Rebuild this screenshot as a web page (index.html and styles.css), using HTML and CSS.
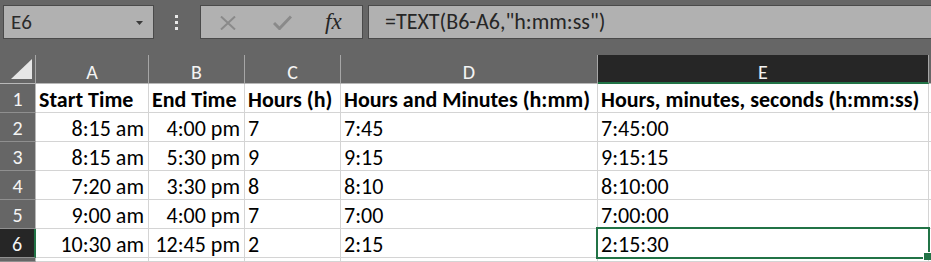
FILE: index.html
```html
<!DOCTYPE html>
<html>
<head>
<meta charset="utf-8">
<link rel="stylesheet" href="styles.css">
</head>
<body>
<div class="toolbar">
  <div class="namebox">
    <span class="name">E6</span>
    <svg class="drop" width="7" height="4" viewBox="0 0 7 4"><path d="M0 0H7L3.5 4Z" fill="#3a3a3a"/></svg>
  </div>
  <div class="grip"><i></i><i></i><i></i></div>
  <div class="fxbtns">
    <svg class="ic-x" width="16" height="14" viewBox="0 0 16 14"><path d="M1 0.5L15 13.5M15 0.5L1 13.5" stroke="#8a8a8a" stroke-width="2" fill="none"/></svg>
    <svg class="ic-ok" width="19" height="15" viewBox="0 0 19 15"><path d="M1 8L6.5 13.5L18 1.5" stroke="#8a8a8a" stroke-width="3" fill="none"/></svg>
    <span class="fx">fx</span>
  </div>
  <div class="formula">=TEXT(B6-A6,"h:mm:ss")</div>
</div>
<div class="sheet">
  <div class="hd corner"><svg width="35" height="28" viewBox="0 0 35 28"><path d="M32 4V24H11Z" fill="#e6e6e6"/></svg></div>
  <div class="hd">A</div>
  <div class="hd">B</div>
  <div class="hd">C</div>
  <div class="hd">D</div>
  <div class="hd hd-sel">E</div>
  <div class="hd hd-end"></div>

  <div class="rh">1</div>
  <div class="c b">Start Time</div>
  <div class="c b">End Time</div>
  <div class="c b">Hours (h)</div>
  <div class="c b">Hours and Minutes (h:mm)</div>
  <div class="c b">Hours, minutes, seconds (h:mm:ss)</div>
  <div class="c"></div>

  <div class="rh">2</div>
  <div class="c r">8:15 am</div>
  <div class="c r">4:00 pm</div>
  <div class="c">7</div>
  <div class="c">7:45</div>
  <div class="c">7:45:00</div>
  <div class="c"></div>

  <div class="rh">3</div>
  <div class="c r">8:15 am</div>
  <div class="c r">5:30 pm</div>
  <div class="c">9</div>
  <div class="c">9:15</div>
  <div class="c">9:15:15</div>
  <div class="c"></div>

  <div class="rh">4</div>
  <div class="c r">7:20 am</div>
  <div class="c r">3:30 pm</div>
  <div class="c">8</div>
  <div class="c">8:10</div>
  <div class="c">8:10:00</div>
  <div class="c"></div>

  <div class="rh">5</div>
  <div class="c r">9:00 am</div>
  <div class="c r">4:00 pm</div>
  <div class="c">7</div>
  <div class="c">7:00</div>
  <div class="c">7:00:00</div>
  <div class="c"></div>

  <div class="rh rh-sel">6</div>
  <div class="c r">10:30 am</div>
  <div class="c r">12:45 pm</div>
  <div class="c">2</div>
  <div class="c">2:15</div>
  <div class="c active">2:15:30<span class="selbox"><span class="handle"></span></span></div>
  <div class="c"></div>

  <div class="rh"></div>
  <div class="c"></div>
  <div class="c"></div>
  <div class="c"></div>
  <div class="c"></div>
  <div class="c"></div>
  <div class="c"></div>
</div>
</body>
</html>
```
FILE: styles.css
```css
html, body {
  margin: 0;
  padding: 0;
  background: #666666;
  overflow: hidden;
}
body {
  width: 931px;
  height: 262px;
  font-family: Calibri, Carlito, "Liberation Sans", sans-serif;
}

/* ---------- formula bar ---------- */
.toolbar {
  display: flex;
  align-items: flex-start;
  height: 55px;
  box-sizing: border-box;
  padding: 5px 0 0 3px;
  background: #666666;
}
.namebox {
  box-sizing: border-box;
  width: 151px;
  height: 34px;
  border: 1px solid #4a4a4a;
  background: #b1b1b1;
  display: flex;
  align-items: center;
  padding-left: 7px;
}
.name {
  font-size: 21px;
  color: #2b2b2b;
  flex: 1;
  line-height: 1;
  padding-top: 1px;
}
.drop {
  margin-right: 10px;
  margin-top: 1px;
}
.grip {
  width: 3px;
  margin: 10px 22px 0 21px;
  display: flex;
  flex-direction: column;
  gap: 3px;
}
.grip i {
  display: block;
  width: 3px;
  height: 3px;
  background: #e8e8e8;
}
.fxbtns {
  box-sizing: border-box;
  width: 163px;
  height: 34px;
  border: 1px solid #4a4a4a;
  background: #b1b1b1;
  display: flex;
  align-items: center;
  padding-left: 19px;
}
.ic-x { margin-top: 2px; }
.ic-ok { margin-left: 37px; margin-top: 1px; }
.fx {
  margin-left: 33px;
  font-family: "Liberation Serif", "DejaVu Serif", serif;
  font-style: italic;
  font-size: 23px;
  color: #262626;
  line-height: 1;
  margin-top: -1px;
}
.formula {
  box-sizing: border-box;
  flex: 1;
  height: 34px;
  margin-left: 5px;
  margin-right: -4px;
  border: 1px solid #4a4a4a;
  background: #b1b1b1;
  color: #262626;
  font-size: 22px;
  line-height: 32px;
  padding-left: 16px;
  white-space: nowrap;
}

/* ---------- sheet ---------- */
.sheet {
  display: grid;
  grid-template-columns: 36px 113px 96px 96px 257px 331px 2px;
  grid-template-rows: repeat(7, 29px) 4px;
  background: #ffffff;
}
.sheet > div {
  box-sizing: border-box;
  white-space: nowrap;
  overflow: hidden;
}
.hd {
  background: #666666;
  color: #f4f4f4;
  font-size: 20px;
  text-align: center;
  line-height: 24px;
  padding-top: 5px;
  border-right: 1px solid #a6a6a6;
  border-bottom: 1px solid #b8b8b8;
}
.corner {
  padding-top: 0;
}
.corner svg { display: block; }
.hd-sel {
  background: #262626;
  border-bottom: 2px solid #217346;
}
.hd-end {
  border-right: none;
}
.rh {
  background: #666666;
  color: #f4f4f4;
  font-size: 20px;
  text-align: center;
  line-height: 25px;
  padding-top: 3px;
  border-right: 1px solid #b8b8b8;
  border-bottom: 1px solid #8f8f8f;
}
.rh-sel {
  background: #262626;
  border-right: 2px solid #217346;
}
.c {
  background: #ffffff;
  color: #000000;
  font-size: 22px;
  line-height: 25px;
  padding: 3px 4px 0 3px;
  border-right: 1px solid #d4d4d4;
  border-bottom: 1px solid #d4d4d4;
}
.sheet > .c.active {
  overflow: visible;
  position: relative;
}
.b { font-weight: bold; }
.r { text-align: right; }
.selbox {
  position: absolute;
  left: -2px;
  top: -2px;
  width: 334px;
  height: 32px;
  box-sizing: border-box;
  border: 2px solid #217346;
  pointer-events: none;
}
.handle {
  position: absolute;
  right: -3px;
  bottom: -3px;
  width: 7px;
  height: 7px;
  background: #217346;
  border-left: 1px solid #ffffff;
  border-top: 1px solid #ffffff;
}
```
